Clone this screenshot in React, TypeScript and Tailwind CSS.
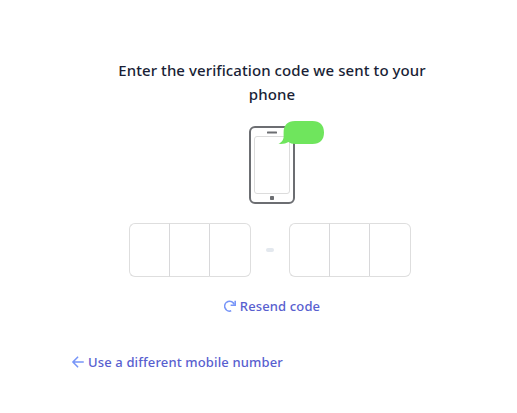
function PhoneIllustration() {
  return (
    <svg className="mt-3.5 mr-[2px] ml-[30px] h-[84px] w-[78px]" viewBox="0 0 78 84" fill="none">
      <rect x="3" y="7" width="44" height="76" rx="5" fill="white" stroke="#6c6e72" strokeWidth="2" />
      <rect x="7.5" y="16.5" width="35" height="57" rx="2.5" stroke="#dcdcdc" />
      <rect x="20" y="11.5" width="10" height="2" rx="0.5" fill="#6c6e72" />
      <rect x="23" y="76" width="4" height="4" rx="0.8" fill="#6c6e72" />
      <path
        d="M48 1H65.5C73 1 77 5.2 77 12.5C77 19.8 73 24 65.5 24H48C45 24 43 23.2 41.5 22C39 23.6 35 24.3 31.5 23.8C35.5 22 37 19 36.6 15V12.5C36.6 5.2 40.5 1 48 1Z"
        fill="#6fe55d"
      />
    </svg>
  );
}

function DigitGroup() {
  return (
    <div className="flex">
      <input aria-label="digit" className="h-[54px] w-[40px] rounded-l-md border border-r-0 border-[#dedede] bg-transparent outline-none" />
      <input aria-label="digit" className="h-[54px] w-[40px] border border-r-0 border-[#dedede] border-l-[#d8d8da] bg-transparent outline-none" />
      <input aria-label="digit" className="h-[54px] w-[42px] rounded-r-md border border-[#dedede] border-l-[#d8d8da] bg-transparent outline-none" />
    </div>
  );
}

export default function App() {
  return (
    <main className="flex h-[413px] w-[517px] flex-col bg-white pt-[58px] pl-[72px] font-['Noto_Sans',sans-serif] font-medium">
      <div className="flex w-[400px] flex-col items-center">
        <h1 className="w-[320px] text-center text-[15px] leading-6 tracking-[0.08px] text-[#1a1f36]">
          Enter the verification code we sent to your phone
        </h1>
        <PhoneIllustration />
        <div className="mt-[19px] flex items-center gap-4 pr-1">
          <DigitGroup />
          <div className="-mx-px h-1 w-2 shrink-0 rounded-sm bg-[#e3e8ee]" />
          <DigitGroup />
        </div>
        <button className="mt-[19px] flex h-5 items-center gap-1 text-[13px] leading-5 tracking-[0.14px] text-[#5860cf]">
          <svg className="size-3" viewBox="0 0 12 12" fill="none" stroke="#7795f8" strokeWidth="1.6">
            <path d="M7.2 10.8A4.9 4.9 0 1 1 10.2 4.5" />
            <path d="M11.2 0.8V5.2H6.6" />
          </svg>
          <span>Resend code</span>
        </button>
      </div>
      <button className="mt-9 flex h-5 items-center gap-1 self-start text-[13px] leading-5 tracking-[0.14px] text-[#5860cf]">
        <svg className="size-3" viewBox="0 0 12 12" fill="none" stroke="#7795f8" strokeWidth="1.6" strokeLinecap="round" strokeLinejoin="round">
          <path d="M11.2 6H1M5.6 1.2L0.9 6L5.6 10.8" />
        </svg>
        <span>Use a different mobile number</span>
      </button>
    </main>
  );
}
